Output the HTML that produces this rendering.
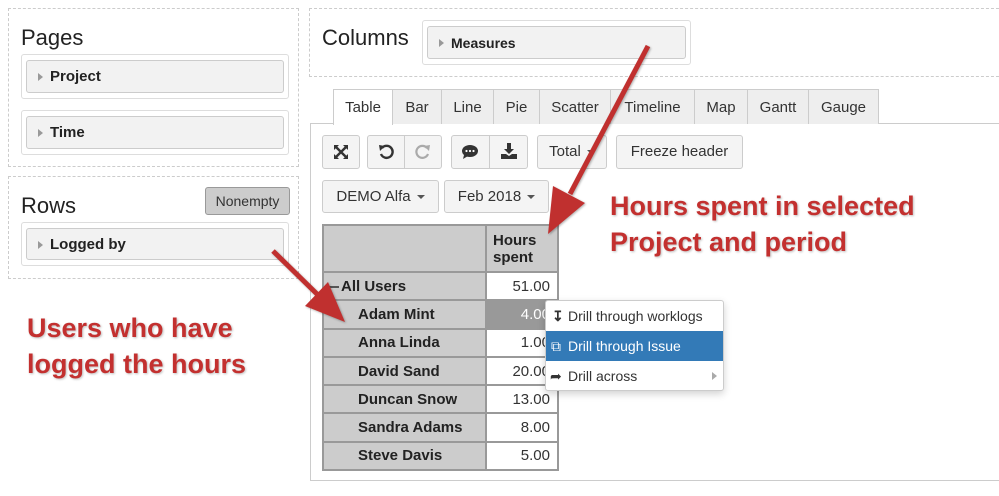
<!DOCTYPE html>
<html><head><meta charset="utf-8"><style>
*{box-sizing:border-box;margin:0;padding:0}
body{width:999px;height:496px;background:#fff;font-family:"Liberation Sans",Arial,sans-serif;color:#333;position:relative;overflow:hidden}
.a{position:absolute}
.dash{border:1px dashed #ccc}
.fo{position:absolute;border:1px solid #ddd;border-radius:3px;background:#fff}
.fi{position:absolute;left:4px;right:4px;top:5px;bottom:5px;border:1px solid #ccc;border-radius:3px;background:#f2f2f2;font-weight:bold;font-size:15px;padding-left:23px;line-height:32px;color:#222}
.fi:before{content:"";position:absolute;left:11px;top:12px;border-left:5px solid #999;border-top:4px solid transparent;border-bottom:4px solid transparent}
.h{font-size:22px;color:#222}
.tab{position:absolute;top:89px;height:35px;border:1px solid #ccc;border-bottom:none;background:#eee;font-size:15px;line-height:35px;text-align:center;color:#333}
.btn{position:absolute;border:1px solid #ccc;border-radius:3px;background:#f4f4f4;font-size:15px;text-align:center;color:#333}
.car{display:inline-block;border-top:4px solid #555;border-left:4px solid transparent;border-right:4px solid transparent;vertical-align:middle;margin-left:6px}
table{border-collapse:collapse;position:absolute;left:322px;top:224px;font-size:15px}
td{border:2px solid #999;height:28.3px;padding:0}
td.l{background:#ccc;width:163px;font-weight:bold;padding-left:34px;color:#222}
td.v{background:#fff;width:72px;text-align:right;padding-right:7px;border-left:2px solid #999}
.mi{position:absolute;left:0;right:0;height:30px;font-size:14px;line-height:30px;padding-left:22px;color:#333}
.red{position:absolute;color:#c3302f;font-weight:bold;font-size:27px;text-shadow:1px 1px 2px rgba(0,0,0,.25);line-height:36px}
</style></head><body>
<div class="a dash" style="left:8px;top:8px;width:291px;height:159px"></div>
<div class="a h" style="left:21px;top:25px">Pages</div>
<div class="fo" style="left:21px;top:54px;width:268px;height:45px"><div class="fi">Project</div></div>
<div class="fo" style="left:21px;top:110px;width:268px;height:45px"><div class="fi">Time</div></div>
<div class="a dash" style="left:8px;top:176px;width:291px;height:103px"></div>
<div class="a h" style="left:21px;top:193px">Rows</div>
<div class="a" style="left:205px;top:187px;width:85px;height:28px;border:1px solid #999;border-radius:3px;background:#ccc;font-size:14px;line-height:26px;text-align:center;color:#333">Nonempty</div>
<div class="fo" style="left:21px;top:222px;width:268px;height:44px"><div class="fi">Logged by</div></div>

<div class="a dash" style="left:309px;top:8px;width:700px;height:69px"></div>
<div class="a h" style="left:322px;top:25px">Columns</div>
<div class="fo" style="left:422px;top:20px;width:269px;height:45px"><div class="fi" style="font-size:14px">Measures</div></div>

<div class="a" style="left:310px;top:123px;width:700px;height:358px;border:1px solid #ccc"></div>
<div class="tab" style="left:333px;width:60px;background:#fff;height:36px">Table</div>
<div class="tab" style="left:392px;width:50px">Bar</div>
<div class="tab" style="left:441px;width:53px">Line</div>
<div class="tab" style="left:493px;width:47px">Pie</div>
<div class="tab" style="left:539px;width:72px">Scatter</div>
<div class="tab" style="left:610px;width:85px">Timeline</div>
<div class="tab" style="left:694px;width:54px">Map</div>
<div class="tab" style="left:747px;width:62px">Gantt</div>
<div class="tab" style="left:808px;width:71px">Gauge</div>

<div class="btn" style="left:322px;top:135px;width:38px;height:34px"></div>
<div class="a" style="left:333px;top:144px"><svg width="16" height="16" viewBox="0 0 16 16"><g fill="#333"><path d="M1 1h5L1 6z"/><path d="M15 1h-5l5 5z"/><path d="M1 15h5L1 10z"/><path d="M15 15h-5l5-5z"/></g><g stroke="#333" stroke-width="2.4"><path d="M3 3l10 10M13 3L3 13"/></g></svg></div>
<div class="btn" style="left:367px;top:135px;width:75px;height:34px"></div>
<div class="a" style="left:404px;top:136px;width:1px;height:32px;background:#ccc"></div>
<div class="a" style="left:377px;top:143px"><svg width="18" height="18" viewBox="0 0 18 18"><path d="M5 5 A6 6 0 1 1 4 11" fill="none" stroke="#333" stroke-width="2.4"/><path d="M2 2 L8 3 L3 8Z" fill="#333"/></svg></div>
<div class="a" style="left:414px;top:143px"><svg width="18" height="18" viewBox="0 0 18 18"><path d="M13 5 A6 6 0 1 0 14 11" fill="none" stroke="#aaa" stroke-width="2.2"/><path d="M16 2 L10 3 L15 8Z" fill="#aaa"/></svg></div>
<div class="btn" style="left:451px;top:135px;width:77px;height:34px"></div>
<div class="a" style="left:489px;top:136px;width:1px;height:32px;background:#ccc"></div>
<div class="a" style="left:461px;top:144px"><svg width="18" height="16" viewBox="0 0 18 16"><ellipse cx="9" cy="7" rx="8" ry="6" fill="#333"/><path d="M3 11 L2 15 L7 12Z" fill="#333"/><circle cx="5.5" cy="7" r="1.1" fill="#fff"/><circle cx="9" cy="7" r="1.1" fill="#fff"/><circle cx="12.5" cy="7" r="1.1" fill="#fff"/></svg></div>
<div class="a" style="left:500px;top:142px"><svg width="18" height="18" viewBox="0 0 18 18"><path d="M7 1h4v6h3l-5 5-5-5h3z" fill="#333"/><path d="M1 12h5l3 2 3-2h5v5H1z" fill="#333"/></svg></div>
<div class="btn" style="left:537px;top:135px;width:70px;height:34px;line-height:32px">Total<span class="car"></span></div>
<div class="btn" style="left:616px;top:135px;width:127px;height:34px;line-height:32px">Freeze header</div>
<div class="btn" style="left:322px;top:180px;width:117px;height:33px;line-height:31px">DEMO Alfa<span class="car"></span></div>
<div class="btn" style="left:444px;top:180px;width:105px;height:33px;line-height:31px">Feb 2018<span class="car"></span></div>

<table>
<tr><td class="l" style="height:47px"></td><td class="v" style="background:#ccc;text-align:left;padding-left:6px;font-weight:bold;line-height:17px;color:#222">Hours<br>spent</td></tr>
<tr><td class="l" style="padding-left:5px"><span style="display:inline-block;width:10px;height:2px;background:#555;vertical-align:middle;margin-right:2px"></span>All Users</td><td class="v">51.00</td></tr>
<tr><td class="l">Adam Mint</td><td class="v" style="background:#999;color:#fff">4.00</td></tr>
<tr><td class="l">Anna Linda</td><td class="v">1.00</td></tr>
<tr><td class="l">David Sand</td><td class="v">20.00</td></tr>
<tr><td class="l">Duncan Snow</td><td class="v">13.00</td></tr>
<tr><td class="l">Sandra Adams</td><td class="v">8.00</td></tr>
<tr><td class="l">Steve Davis</td><td class="v">5.00</td></tr>
</table>

<div class="a" style="left:545px;top:300px;width:179px;height:91px;background:#fff;border:1px solid #ccc;border-radius:3px;box-shadow:0 3px 8px rgba(0,0,0,.18)">
<div class="mi" style="top:0"><span class="a" style="left:6px;font-weight:bold">↧</span>Drill through worklogs</div>
<div class="mi" style="top:30px;background:#337ab7;color:#fff"><span class="a" style="left:5px">⧉</span>Drill through Issue</div>
<div class="mi" style="top:60px"><span class="a" style="left:4px">➦</span>Drill across<span class="a" style="right:6px;top:11px;border-left:5px solid #aaa;border-top:4px solid transparent;border-bottom:4px solid transparent"></span></div>
</div>

<svg class="a" style="left:0;top:0" width="999" height="496">
<g fill="#c0302f" stroke="#c0302f" style="filter:drop-shadow(1px 1px 1px rgba(0,0,0,.3))">
<line x1="648" y1="46" x2="570" y2="194" stroke-width="5"/>
<polygon points="548,234 585,203 553,186" stroke="none"/>
<line x1="273" y1="251" x2="318" y2="295" stroke-width="5"/>
<polygon points="345,322 305,306 328,282" stroke="none"/>
</g></svg>
<div class="red" style="left:610px;top:188px">Hours spent in selected<br>Project and period</div>
<div class="red" style="left:27px;top:310px">Users who have<br>logged the hours</div>
</body></html>
